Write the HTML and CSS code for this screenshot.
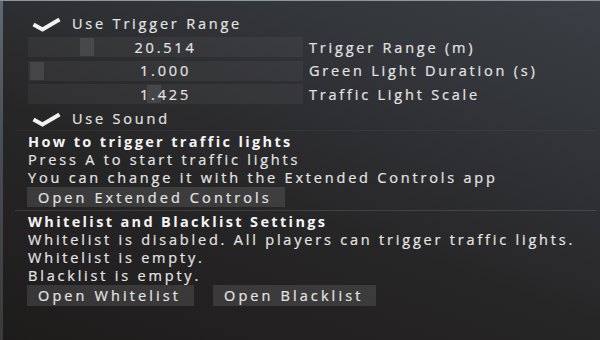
FILE: index.html
```html
<!DOCTYPE html>
<html>
<head>
<meta charset="utf-8">
<link rel="stylesheet" href="styles.css">
</head>
<body>
<div class="window">
  <div class="edge"></div>
  <div class="panel">
    <div class="check-row first">
      <svg class="check" width="32" height="24" viewBox="0 0 32 24"><polyline points="3.5,13.5 12.5,18.5 29.5,8.5"/></svg>
      <span class="check-label">Use Trigger Range</span>
    </div>
    <div class="slider-row s1">
      <div class="track"><div class="handle" style="left:52px"></div><span class="value">20.514</span></div>
      <span class="slider-label">Trigger Range (m)</span>
    </div>
    <div class="slider-row s2">
      <div class="track"><div class="handle" style="left:2px"></div><span class="value">1.000</span></div>
      <span class="slider-label">Green Light Duration (s)</span>
    </div>
    <div class="slider-row s3">
      <div class="track"><div class="handle" style="left:119px"></div><span class="value">1.425</span></div>
      <span class="slider-label">Traffic Light Scale</span>
    </div>
    <div class="check-row second">
      <svg class="check" width="32" height="24" viewBox="0 0 32 24"><polyline points="3.5,13.5 12.5,18.5 29.5,8.5"/></svg>
      <span class="check-label">Use Sound</span>
    </div>
    <div class="separator faint"></div>
    <div class="heading h1">How to trigger traffic lights</div>
    <div class="text">Press A to start traffic lights</div>
    <div class="text">You can change it with the Extended Controls app</div>
    <div class="button-row b1">
      <span class="button">Open Extended Controls</span>
    </div>
    <div class="separator strong"></div>
    <div class="heading h2">Whitelist and Blacklist Settings</div>
    <div class="text">Whitelist is disabled. All players can trigger traffic lights.</div>
    <div class="text">Whitelist is empty.</div>
    <div class="text">Blacklist is empty.</div>
    <div class="button-row b2">
      <span class="button">Open Whitelist</span>
      <span class="button">Open Blacklist</span>
    </div>
  </div>
</div>
</body>
</html>
```

FILE: styles.css
```css
html, body {
  margin: 0;
  padding: 0;
  width: 600px;
  height: 340px;
  overflow: hidden;
}

body {
  font-family: "Open Sans", "Noto Sans", sans-serif;
  font-size: 14.5px;
  letter-spacing: 2.8px;
  color: #e4e4e4;
  -webkit-text-stroke: 0.2px #e4e4e4;
}

.window {
  display: flex;
  width: 600px;
  height: 340px;
  box-sizing: border-box;
  border-top: 1px solid #8e959c;
  background: linear-gradient(200deg, #3a3f45 0%, #303236 30%, #272627 58%, #1e1b1b 100%);
}

.edge {
  width: 3px;
  flex: none;
  background: linear-gradient(180deg, #5d6976 0%, #4a4f55 40%, #3a3a3a 100%);
}

.panel {
  flex: 1;
  display: flex;
  flex-direction: column;
  padding: 10px 4px 0 25px;
}

.check-row {
  display: flex;
  align-items: center;
  height: 24px;
}

.check-row.second {
  margin-top: 2px;
}

.check {
  margin-left: 2px;
  flex: none;
}

.check polyline {
  fill: none;
  stroke: #f2f2f2;
  stroke-width: 4;
  stroke-linejoin: miter;
  stroke-linecap: butt;
}

.check-label {
  margin-left: 10px;
  white-space: nowrap;
}

.slider-row {
  display: flex;
  align-items: center;
  height: 20px;
}

.slider-row.s1 { margin-top: 2px; }
.slider-row.s2 { margin-top: 3.5px; }
.slider-row.s3 { margin-top: 3.5px; }

.track {
  position: relative;
  width: 275px;
  height: 20px;
  flex: none;
  background: rgba(255, 255, 255, 0.045);
  display: flex;
  align-items: center;
  justify-content: center;
}

.handle {
  position: absolute;
  top: 1px;
  width: 14px;
  height: 18px;
  background: rgba(255, 255, 255, 0.09);
}

.value {
  position: relative;
  white-space: nowrap;
}

.slider-label {
  margin-left: 6px;
  white-space: nowrap;
}

.separator {
  height: 1px;
  margin-left: -13px;
  flex: none;
}

.separator.faint {
  background: rgba(255, 255, 255, 0.04);
}

.separator.strong {
  margin-top: 2.5px;
  background: rgba(255, 255, 255, 0.12);
}

.heading {
  font-weight: 700;
  color: #f4f4f4;
  -webkit-text-stroke: 0;
  line-height: 18px;
  height: 18px;
  letter-spacing: 2.35px;
  white-space: nowrap;
}

.heading.h1 { margin-top: 1.5px; }
.heading.h2 { margin-top: 2px; }

.text {
  line-height: 18px;
  height: 18px;
  white-space: nowrap;
}

.button-row {
  display: flex;
  gap: 19px;
  margin-left: -1px;
  margin-top: 0.5px;
}

.button {
  display: flex;
  align-items: center;
  padding: 0 13px 0 11px;
  letter-spacing: 3.1px;
  background: rgba(255, 255, 255, 0.11);
  white-space: nowrap;
}

.b1 .button { height: 20px; }
.b2 .button { height: 21px; }
```
